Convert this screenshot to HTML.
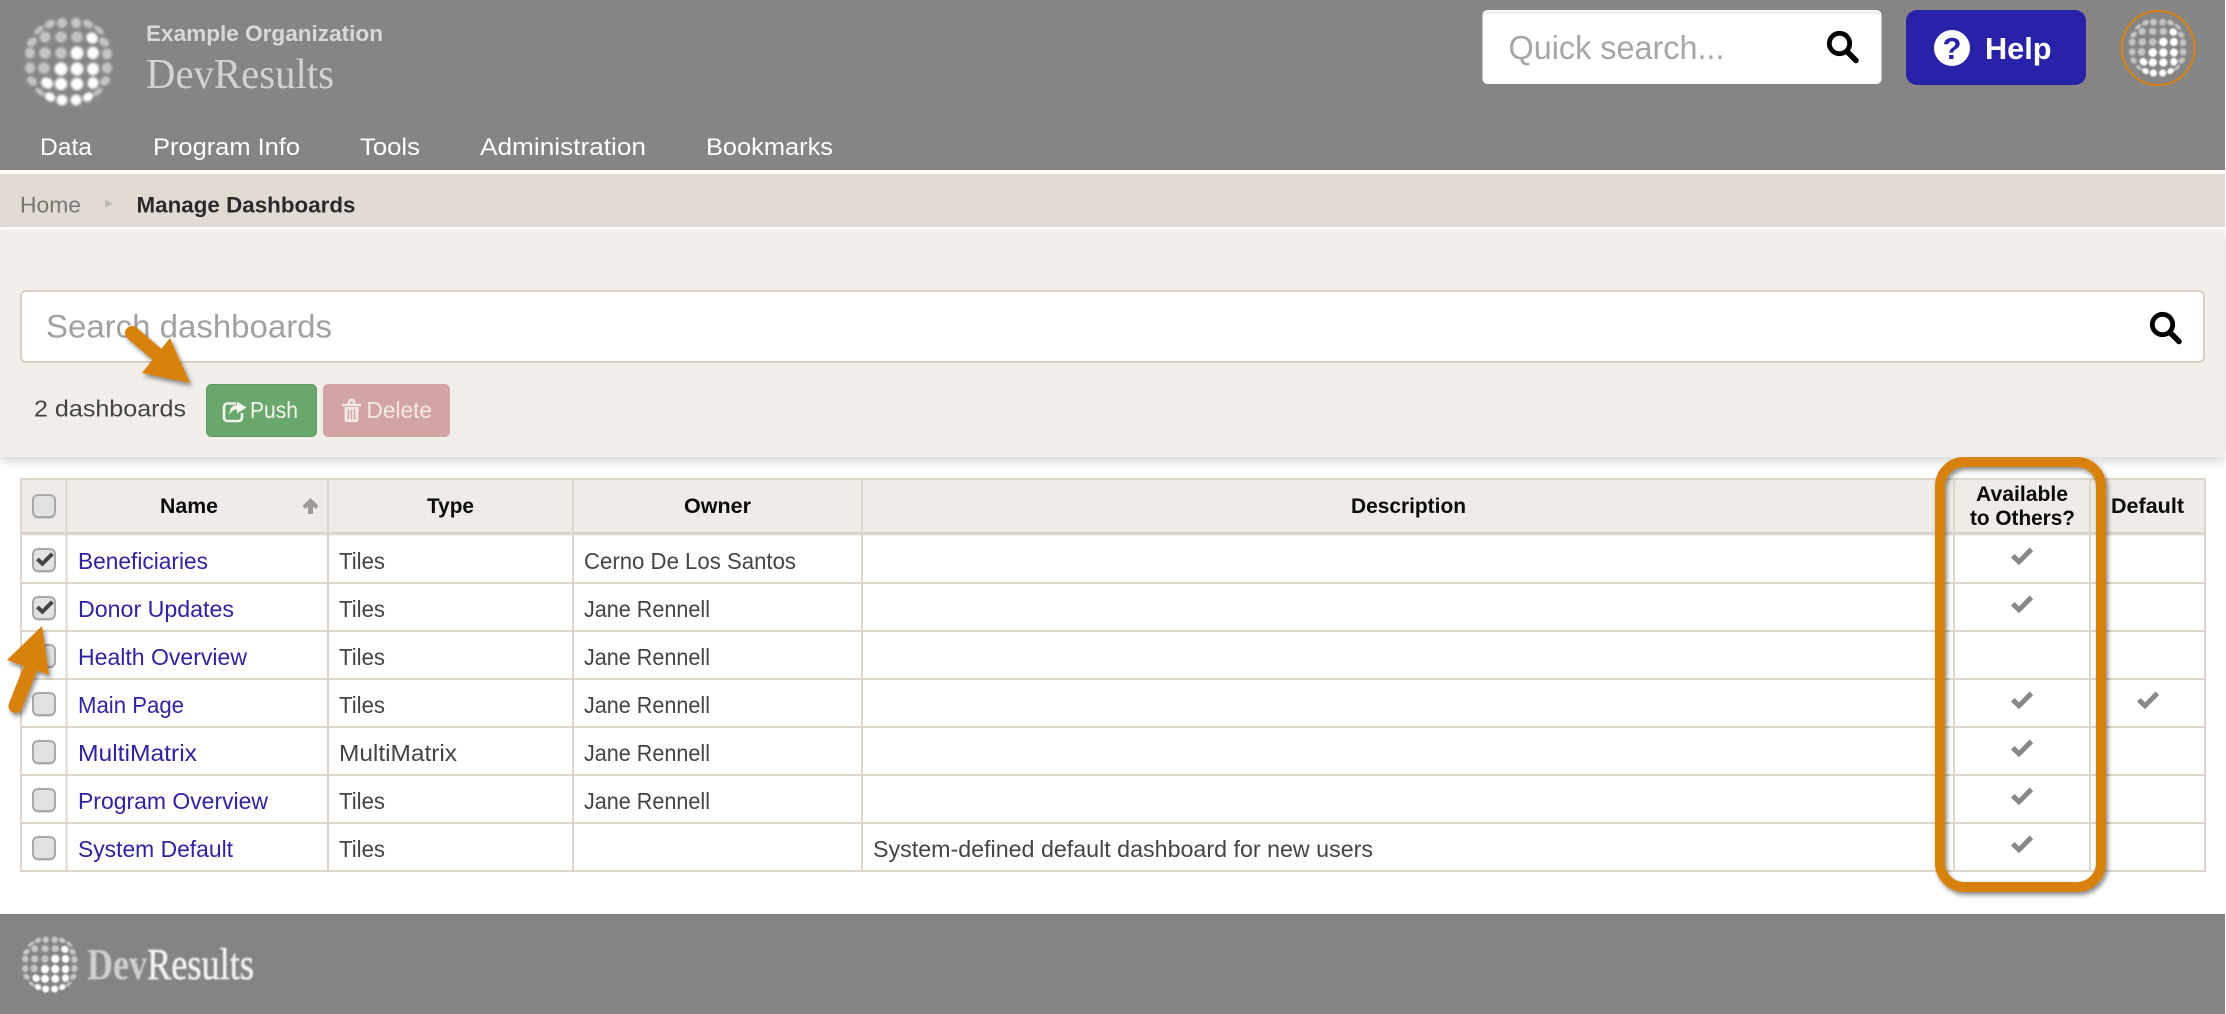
<!DOCTYPE html>
<html lang="en">
<head>
<meta charset="utf-8">
<title>Manage Dashboards - DevResults</title>
<style>
html,body{margin:0;padding:0;background:#fff;width:2226px;height:1014px;overflow:hidden}
svg{display:block}
text{font-family:"Liberation Sans",sans-serif}
.serif{font-family:"Liberation Serif",serif}
.td{font-size:22.7px;fill:#444}
.a{font-size:22.7px;fill:#2e22a5}
.th{font-size:21px;font-weight:bold;fill:#0a0a0a}
.nav{font-size:24px;fill:#fff}
</style>
</head>
<body>
<svg xmlns="http://www.w3.org/2000/svg" width="2226" height="1014" viewBox="0 0 2226 1014">
<defs>
<filter id="soft" x="-10%" y="-10%" width="120%" height="120%"><feGaussianBlur stdDeviation="1.2"/></filter>
<filter id="softer" x="-5%" y="-20%" width="110%" height="140%"><feGaussianBlur stdDeviation="0.8"/></filter>
<filter id="panelShadow" x="-2%" y="-5%" width="104%" height="115%"><feDropShadow dx="0" dy="4" stdDeviation="5" flood-color="#000" flood-opacity="0.16"/></filter>
<filter id="anno" x="-20%" y="-20%" width="140%" height="140%"><feDropShadow dx="2" dy="3" stdDeviation="2.5" flood-color="#000" flood-opacity="0.45"/></filter>
<g id="globe" filter="url(#soft)">
<g fill="#c6c5c3">
<ellipse cx="39" cy="30" rx="6" ry="2.5" transform="rotate(-40 39 30)"/><ellipse cx="50" cy="24" rx="5.5" ry="3.8" transform="rotate(-30 50 24)"/><ellipse cx="62" cy="23" rx="5" ry="5.2"/><ellipse cx="76" cy="23" rx="5" ry="5.2"/><ellipse cx="88" cy="24" rx="5.5" ry="3.8" transform="rotate(30 88 24)"/><ellipse cx="99" cy="30" rx="6" ry="2.5" transform="rotate(40 99 30)"/>
<ellipse cx="32" cy="42" rx="5.5" ry="4" transform="rotate(-40 32 42)"/><ellipse cx="45" cy="37" rx="5.5" ry="5.5"/><ellipse cx="61" cy="37" rx="5.8" ry="5.5"/><ellipse cx="77" cy="37" rx="5.8" ry="5.5"/><ellipse cx="104" cy="42" rx="5.5" ry="4" transform="rotate(40 104 42)"/>
<ellipse cx="30" cy="53" rx="5" ry="5.5"/><ellipse cx="45" cy="53" rx="5.8" ry="5.8"/><ellipse cx="61" cy="53" rx="5.8" ry="5.8"/><ellipse cx="107" cy="54" rx="5" ry="5.5"/>
<ellipse cx="30" cy="68" rx="5" ry="5.5"/><ellipse cx="44" cy="68" rx="5.8" ry="5.8"/><ellipse cx="107" cy="68" rx="5" ry="5.5"/>
<ellipse cx="32" cy="81" rx="5.5" ry="4" transform="rotate(40 32 81)"/><ellipse cx="105" cy="81" rx="5.5" ry="4" transform="rotate(-40 105 81)"/>
<ellipse cx="40" cy="92" rx="5.5" ry="2.5" transform="rotate(40 40 92)"/><ellipse cx="98" cy="92" rx="5.5" ry="2.5" transform="rotate(-40 98 92)"/>
</g>
<g fill="#fff" stroke="#fff" stroke-width=".8">
<ellipse cx="92" cy="38" rx="5.5" ry="5" transform="rotate(35 92 38)"/>
<ellipse cx="77" cy="53" rx="6" ry="6.2"/><ellipse cx="93" cy="53" rx="5.5" ry="5.8"/>
<ellipse cx="61" cy="69" rx="6" ry="6.2"/><ellipse cx="77" cy="69" rx="6" ry="6.2"/><ellipse cx="93" cy="69" rx="5.5" ry="5.8"/>
<ellipse cx="47" cy="83" rx="5.8" ry="5" transform="rotate(35 47 83)"/><ellipse cx="61" cy="84" rx="5.8" ry="5.8"/><ellipse cx="77" cy="84" rx="5.8" ry="5.8"/><ellipse cx="93" cy="83" rx="5" ry="5.5"/>
<ellipse cx="50" cy="97" rx="5" ry="3.8" transform="rotate(35 50 97)"/><ellipse cx="62" cy="100" rx="5" ry="5"/><ellipse cx="76" cy="100" rx="5" ry="5"/><ellipse cx="88" cy="97" rx="5" ry="3.8" transform="rotate(-35 88 97)"/>
</g>
</g>
<polygon id="chk" points="0,10.5 3.6,7 8,11.4 18.6,0.5 22.2,4 8,18.2"/>
<g id="box"><rect x="33" y="1" width="22" height="23" rx="5" fill="#000" fill-opacity=".12"/><rect x="33" y="0" width="22" height="22" rx="5" fill="#e2e2e2" stroke="#a9a9a9" stroke-width="2"/></g>
<g id="mag" fill="none" stroke="#000"><circle cx="12.5" cy="11.5" r="10.2" stroke-width="4.8"/><line x1="20.500" y1="20" x2="29" y2="28.500" stroke-width="5.500" stroke-linecap="round"/></g>
</defs>

<!-- header -->
<rect x="0" y="0" width="2225" height="170" fill="#878583"/>
<use href="#globe"/>
<text x="146" y="41" font-size="22.5" font-weight="bold" fill="#dbd9d7" textLength="237" lengthAdjust="spacingAndGlyphs">Example Organization</text>
<text class="serif" x="146" y="88" font-size="42" fill="#dcdad8" fill-opacity=".9" textLength="188" lengthAdjust="spacingAndGlyphs">DevResults</text>
<text class="nav" x="40" y="155" textLength="52" lengthAdjust="spacingAndGlyphs">Data</text>
<text class="nav" x="153" y="155" textLength="147" lengthAdjust="spacingAndGlyphs">Program Info</text>
<text class="nav" x="360" y="155" textLength="60" lengthAdjust="spacingAndGlyphs">Tools</text>
<text class="nav" x="480" y="155" textLength="166" lengthAdjust="spacingAndGlyphs">Administration</text>
<text class="nav" x="706" y="155" textLength="127" lengthAdjust="spacingAndGlyphs">Bookmarks</text>

<!-- quick search -->
<rect x="1482.5" y="10" width="399" height="74" rx="5" fill="#fff"/>
<rect x="1484" y="11" width="396" height="3" fill="#f1f1f1"/>
<text x="1508.500" y="59" font-size="33" fill="#a8a6a4" textLength="216" lengthAdjust="spacingAndGlyphs">Quick search...</text>
<use href="#mag" x="1827" y="32"/>

<!-- help -->
<rect x="1906" y="10" width="180" height="75" rx="11" fill="#2822a8"/>
<circle cx="1952" cy="48" r="18" fill="#fff"/>
<text x="1952" y="59" font-size="31" font-weight="bold" fill="#2822a8" text-anchor="middle">?</text>
<text x="1985" y="59" font-size="31" font-weight="bold" fill="#fff" textLength="66.5" lengthAdjust="spacingAndGlyphs">Help</text>

<!-- avatar -->
<ellipse cx="2158" cy="48" rx="36.5" ry="37" fill="none" stroke="#d8820f" stroke-width="2"/>
<use href="#globe" transform="translate(2112.5 7) scale(.66)"/>

<!-- breadcrumb -->
<rect x="0" y="174" width="2225" height="53" fill="#e2dbd4"/>
<text x="20" y="212.5" font-size="22.5" fill="#787674" textLength="61" lengthAdjust="spacingAndGlyphs">Home</text>
<polygon points="105,199 113,203.5 105,208" fill="#bfbab4"/>
<text x="136.500" y="212.5" font-size="22.5" font-weight="bold" fill="#2a2a2a" textLength="219" lengthAdjust="spacingAndGlyphs">Manage Dashboards</text>

<!-- panel -->
<rect x="0" y="230" width="2225" height="227" fill="#f2efea" filter="url(#panelShadow)"/>
<rect x="21" y="291" width="2183" height="71" rx="5" fill="#fff" stroke="#d8d0c3" stroke-width="2"/>
<text x="46" y="337.5" font-size="32" fill="#a3a19f" textLength="286" lengthAdjust="spacingAndGlyphs">Search dashboards</text>
<use href="#mag" x="2150" y="313"/>
<text x="34" y="416.5" font-size="23" fill="#444" textLength="152" lengthAdjust="spacingAndGlyphs">2 dashboards</text>

<rect x="206.5" y="384.5" width="110" height="52" rx="5" fill="#6aa76c" stroke="#5d9a60"/>
<path d="M236 403.500h-8.500a3.500 3.500 0 0 0-3.500 3.500v10.500a3.500 3.500 0 0 0 3.500 3.500h11a3.500 3.500 0 0 0 3.500-3.500v-4.500" fill="none" stroke="#f4f4ee" stroke-width="2.600"/>
<path d="M237 401.500L246.500 407.500L237 413.500V409.500C233.500 409.500 231 411 229.500 415.500C229 409.500 232 405 237 405Z" fill="#f4f4ee"/>
<text x="250" y="418" font-size="23.500" fill="#f6f6f0" textLength="48" lengthAdjust="spacingAndGlyphs">Push</text>

<rect x="323" y="384" width="127" height="53" rx="5" fill="#d2a4a3"/>
<path d="M342 405h19M349 405v-3.500a1.500 1.500 0 0 1 1.500-1.500h2a1.500 1.500 0 0 1 1.500 1.500v3.500" fill="none" stroke="#f2e8e4" stroke-width="2.400"/>
<path d="M344.500 407h14v13a2 2 0 0 1-2 2h-10a2 2 0 0 1-2-2z" fill="#f2e8e4"/>
<path d="M348.500 409.500v10M351.500 409.500v10M354.500 409.500v10" stroke="#d2a4a3" stroke-width="1.400"/>
<text x="366.500" y="418" font-size="23.500" fill="#f2e8e4" textLength="65.500" lengthAdjust="spacingAndGlyphs">Delete</text>

<!-- table -->
<rect x="21" y="479" width="2184" height="55" fill="#efebe6"/>
<g fill="none" stroke="#dcd6cb" stroke-width="2">
<rect x="21" y="479" width="2184" height="392"/>
<path d="M66.500 479V871M328 479V871M573 479V871M862 479V871M1954 479V871M2090 479V871"/>
<path d="M21 583H2205M21 631H2205M21 679H2205M21 727H2205M21 775H2205M21 823H2205"/>
<path d="M21 533.500H2205" stroke-width="3.500"/>
</g>
<text class="th" x="160" y="513" textLength="58" lengthAdjust="spacingAndGlyphs">Name</text>
<polygon points="310.500,498 318.500,506 315.500,509 313,506.500 313,514 308,514 308,506.500 305.500,509 302.500,506" fill="#9c9a98"/>
<text class="th" x="427" y="513" textLength="47" lengthAdjust="spacingAndGlyphs">Type</text>
<text class="th" x="684" y="513" textLength="67" lengthAdjust="spacingAndGlyphs">Owner</text>
<text class="th" x="1351" y="513" textLength="115" lengthAdjust="spacingAndGlyphs">Description</text>
<text class="th" x="1976" y="501" textLength="92" lengthAdjust="spacingAndGlyphs">Available</text>
<text class="th" x="1970" y="525" textLength="105" lengthAdjust="spacingAndGlyphs">to Others?</text>
<text class="th" x="2111" y="513" textLength="73" lengthAdjust="spacingAndGlyphs">Default</text>

<use href="#box" y="495"/>
<use href="#box" y="549"/>
<use href="#box" y="597"/>
<use href="#box" y="645"/>
<use href="#box" y="693"/>
<use href="#box" y="741"/>
<use href="#box" y="789"/>
<use href="#box" y="837"/>
<g fill="#444">
<use href="#chk" transform="translate(36 552) scale(.8)"/>
<use href="#chk" transform="translate(36 600) scale(.8)"/>
</g>

<text class="a" x="78" y="569" textLength="130" lengthAdjust="spacingAndGlyphs">Beneficiaries</text>
<text class="a" x="78" y="617" textLength="156" lengthAdjust="spacingAndGlyphs">Donor Updates</text>
<text class="a" x="78" y="665" textLength="169" lengthAdjust="spacingAndGlyphs">Health Overview</text>
<text class="a" x="78" y="713" textLength="106" lengthAdjust="spacingAndGlyphs">Main Page</text>
<text class="a" x="78" y="761" textLength="119" lengthAdjust="spacingAndGlyphs">MultiMatrix</text>
<text class="a" x="78" y="809" textLength="190" lengthAdjust="spacingAndGlyphs">Program Overview</text>
<text class="a" x="78" y="857" textLength="155" lengthAdjust="spacingAndGlyphs">System Default</text>

<text class="td" x="339" y="569" textLength="46" lengthAdjust="spacingAndGlyphs">Tiles</text>
<text class="td" x="339" y="617" textLength="46" lengthAdjust="spacingAndGlyphs">Tiles</text>
<text class="td" x="339" y="665" textLength="46" lengthAdjust="spacingAndGlyphs">Tiles</text>
<text class="td" x="339" y="713" textLength="46" lengthAdjust="spacingAndGlyphs">Tiles</text>
<text class="td" x="339" y="761" textLength="118" lengthAdjust="spacingAndGlyphs">MultiMatrix</text>
<text class="td" x="339" y="809" textLength="46" lengthAdjust="spacingAndGlyphs">Tiles</text>
<text class="td" x="339" y="857" textLength="46" lengthAdjust="spacingAndGlyphs">Tiles</text>

<text class="td" x="584" y="569" textLength="212" lengthAdjust="spacingAndGlyphs">Cerno De Los Santos</text>
<text class="td" x="584" y="617" textLength="126" lengthAdjust="spacingAndGlyphs">Jane Rennell</text>
<text class="td" x="584" y="665" textLength="126" lengthAdjust="spacingAndGlyphs">Jane Rennell</text>
<text class="td" x="584" y="713" textLength="126" lengthAdjust="spacingAndGlyphs">Jane Rennell</text>
<text class="td" x="584" y="761" textLength="126" lengthAdjust="spacingAndGlyphs">Jane Rennell</text>
<text class="td" x="584" y="809" textLength="126" lengthAdjust="spacingAndGlyphs">Jane Rennell</text>
<text class="td" x="873" y="857" textLength="500" lengthAdjust="spacingAndGlyphs">System-defined default dashboard for new users</text>

<g fill="#888">
<use href="#chk" x="2011" y="547"/>
<use href="#chk" x="2011" y="595"/>
<use href="#chk" x="2011" y="691"/>
<use href="#chk" x="2137" y="691"/>
<use href="#chk" x="2011" y="739"/>
<use href="#chk" x="2011" y="787"/>
<use href="#chk" x="2011" y="835"/>
</g>

<!-- footer -->
<rect x="0" y="914" width="2225" height="100" fill="#868482"/>
<use href="#globe" transform="translate(6 925) scale(.64)"/>
<g filter="url(#softer)">
<text class="serif" x="87" y="979" font-size="44" font-weight="bold" fill="#cfcecc" textLength="60" lengthAdjust="spacingAndGlyphs">Dev</text>
<text class="serif" x="147" y="979" font-size="44" fill="#f3f3f2" stroke="#f3f3f2" stroke-width=".5" textLength="107" lengthAdjust="spacingAndGlyphs">Results</text>
</g>

<!-- annotations -->
<g filter="url(#anno)">
<rect x="1940" y="462" width="161" height="425" rx="24" fill="none" stroke="#d8820f" stroke-width="10"/>
</g>
<g filter="url(#anno)" fill="#d8820f">
<path d="M132 333L160 357" stroke="#d8820f" stroke-width="14" stroke-linecap="round" fill="none"/>
<polygon points="170,338 190,383 142,373"/>
</g>
<g filter="url(#anno)" fill="#d8820f">
<path d="M32 664L15.500 706" stroke="#d8820f" stroke-width="14" stroke-linecap="round" fill="none"/>
<polygon points="42,626 49,675 7,660"/>
</g>
</svg>
</body>
</html>
